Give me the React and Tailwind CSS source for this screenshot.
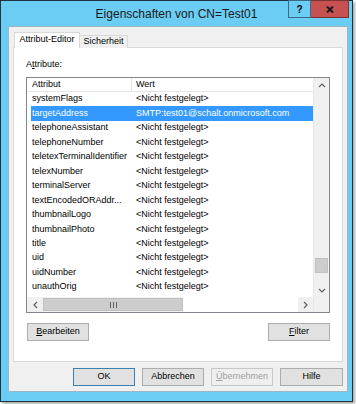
import React from "react";

const rows = [
  ["systemFlags", "<Nicht festgelegt>"],
  ["targetAddress", "SMTP:test01@schalt.onmicrosoft.com"],
  ["telephoneAssistant", "<Nicht festgelegt>"],
  ["telephoneNumber", "<Nicht festgelegt>"],
  ["teletexTerminalIdentifier", "<Nicht festgelegt>"],
  ["telexNumber", "<Nicht festgelegt>"],
  ["terminalServer", "<Nicht festgelegt>"],
  ["textEncodedORAddr...", "<Nicht festgelegt>"],
  ["thumbnailLogo", "<Nicht festgelegt>"],
  ["thumbnailPhoto", "<Nicht festgelegt>"],
  ["title", "<Nicht festgelegt>"],
  ["uid", "<Nicht festgelegt>"],
  ["uidNumber", "<Nicht festgelegt>"],
  ["unauthOrig", "<Nicht festgelegt>"],
];

function Chevron({ dir }) {
  const paths = {
    up: "M1 5 L4 2 L7 5",
    down: "M1 2 L4 5 L7 2",
    left: "M5 1 L2 4 L5 7",
    right: "M2 1 L5 4 L2 7",
  };
  const vert = dir === "up" || dir === "down";
  return (
    <svg width={vert ? 8 : 7} height={vert ? 7 : 8} viewBox={vert ? "0 0 8 7" : "0 0 7 8"}>
      <path d={paths[dir]} fill="none" stroke="#606060" strokeWidth="1.2" />
    </svg>
  );
}

function Btn({ children, className = "", disabled = false, def = false }) {
  return (
    <div
      className={
        "h-[18px] flex items-center justify-center border text-[9px] " +
        (def ? "border-[#3c7fb1] " : "") +
        (disabled
          ? "text-[#a0a0a0] bg-[#efefef] border-[#c8c8c8] "
          : "text-black bg-[#e1e1e1] " + (def ? "" : "border-[#adadad] ")) +
        className
      }
    >
      {children}
    </div>
  );
}

export default function App() {
  return (
    <div
      className="w-[356px] h-[404px] bg-white"
      style={{ fontFamily: '"Liberation Sans", Arial, sans-serif' }}
    >
      <div className="w-[353px] h-[402px] border border-[#1e3140] bg-[#6bcdf3] flex flex-col shadow-[2px_2px_3px_rgba(0,0,0,0.35)]">
        {/* title bar */}
        <div className="h-[25px] grid grid-cols-[64px_1fr_64px] shrink-0">
          <div />
          <div className="flex items-center justify-center text-[12px] text-[#1b1b1b] pt-[1px]">
            Eigenschaften von CN=Test01
          </div>
          <div className="flex items-start justify-end pr-[3px] -mt-[1px]">
            <div className="w-[24px] h-[18px] border border-[#3a6a84] bg-[#6bcdf3] flex items-center justify-center text-[10px] font-bold text-black">
              ?
            </div>
            <div className="w-[39px] h-[18px] border border-[#7b3532] border-l-0 bg-[#c75050] flex items-center justify-center">
              <svg width="8" height="7" viewBox="0 0 8 7">
                <path d="M1 0.5 L7 6.5 M7 0.5 L1 6.5" stroke="#1a1a1a" strokeWidth="2" />
              </svg>
            </div>
          </div>
        </div>

        {/* client area */}
        <div className="ml-[7px] mr-[4px] h-[366px] bg-[#f0f0f0] border border-[#9fb5c2] px-[4px] pt-[5px] flex flex-col">
          {/* tabs */}
          <div className="flex items-end h-[16px] ml-[1px] relative z-10">
            <div className="h-[16px] w-[66px] bg-white border border-[#d9d9d9] border-b-0 flex items-center justify-center text-[9px] text-black pb-[1px]">
              Attribut-Editor
            </div>
            <div className="h-[13px] w-[48px] bg-[#f0f0f0] border border-[#d9d9d9] border-l-0 border-b-0 flex items-center justify-center text-[9px] text-black">
              Sicherheit
            </div>
          </div>
          {/* panel */}
          <div className="h-[315px] -mt-[1px] bg-white border border-[#d9d9d9] px-[12px] flex flex-col">
            <div className="h-[29px] flex items-center pt-[5px] text-[9px] text-black">
              <span>A<span className="underline">t</span>tribute:</span>
            </div>
            {/* list */}
            <div className="h-[236px] border border-[#828790] flex flex-col">
              <div className="flex flex-1 min-h-0">
                <div className="flex-1 flex flex-col">
                  <div className="h-[14px] flex items-center text-[9px] text-black border-b border-[#e5e5e5]">
                    <div className="w-[105px] pl-[5px] border-r border-[#e5e5e5] h-full flex items-center">Attribut</div>
                    <div className="pl-[4px]">Wert</div>
                  </div>
                  {rows.map(([a, v], i) => (
                    <div
                      key={a}
                      className={
                        "h-[14.46px] flex items-center text-[9px] whitespace-nowrap " +
                        (i === 1 ? "bg-[#3399ff] text-white ml-[4px]" : "text-black")
                      }
                    >
                      <div className={i === 1 ? "w-[101px] pl-[1px]" : "w-[105px] pl-[5px]"}>
                        {a}
                      </div>
                      <div className="pl-[4px]">{v}</div>
                    </div>
                  ))}
                </div>
                {/* vertical scrollbar */}
                <div className="w-[16px] bg-[#f0f0f0] border-l border-[#e8e8e8] flex flex-col">
                  <div className="h-[15px] flex items-center justify-center">
                    <Chevron dir="up" />
                  </div>
                  <div className="flex-1 flex flex-col justify-end pb-[10px] px-[1px]">
                    <div className="h-[15px] bg-[#cdcdcd] border border-[#c0c0c0]" />
                  </div>
                  <div className="h-[14px] flex items-center justify-center">
                    <Chevron dir="down" />
                  </div>
                </div>
              </div>
              {/* horizontal scrollbar */}
              <div className="h-[15px] flex bg-[#f0f0f0]">
                <div className="w-[16px] flex items-center justify-center">
                  <Chevron dir="left" />
                </div>
                <div className="w-[140px] my-[1px] bg-[#cdcdcd] border border-[#c0c0c0] flex items-center justify-center">
                  <div className="flex gap-[2px]">
                    <div className="w-[1px] h-[6px] bg-[#606060]" />
                    <div className="w-[1px] h-[6px] bg-[#606060]" />
                    <div className="w-[1px] h-[6px] bg-[#606060]" />
                  </div>
                </div>
                <div className="flex-1 bg-white" />
                <div className="w-[15px] flex items-center justify-center">
                  <Chevron dir="right" />
                </div>
                <div className="w-[16px] bg-[#f0f0f0] border-l border-[#e8e8e8]" />
              </div>
            </div>
            <div className="flex justify-between mt-[10px] pl-[1px]">
              <Btn className="w-[62px]">
                <span><span className="underline">B</span>earbeiten</span>
              </Btn>
              <Btn className="w-[62px]">
                <span><span className="underline">F</span>ilter</span>
              </Btn>
            </div>
          </div>
          {/* bottom buttons */}
          <div className="flex justify-end gap-[7px] mt-[6px]">
            <Btn def className="w-[62px]">OK</Btn>
            <Btn className="w-[62px]">Abbrechen</Btn>
            <Btn disabled className="w-[62px]">
              <span><span className="underline">Ü</span>bernehmen</span>
            </Btn>
            <Btn className="w-[63px]">Hilfe</Btn>
          </div>
        </div>
      </div>
    </div>
  );
}
